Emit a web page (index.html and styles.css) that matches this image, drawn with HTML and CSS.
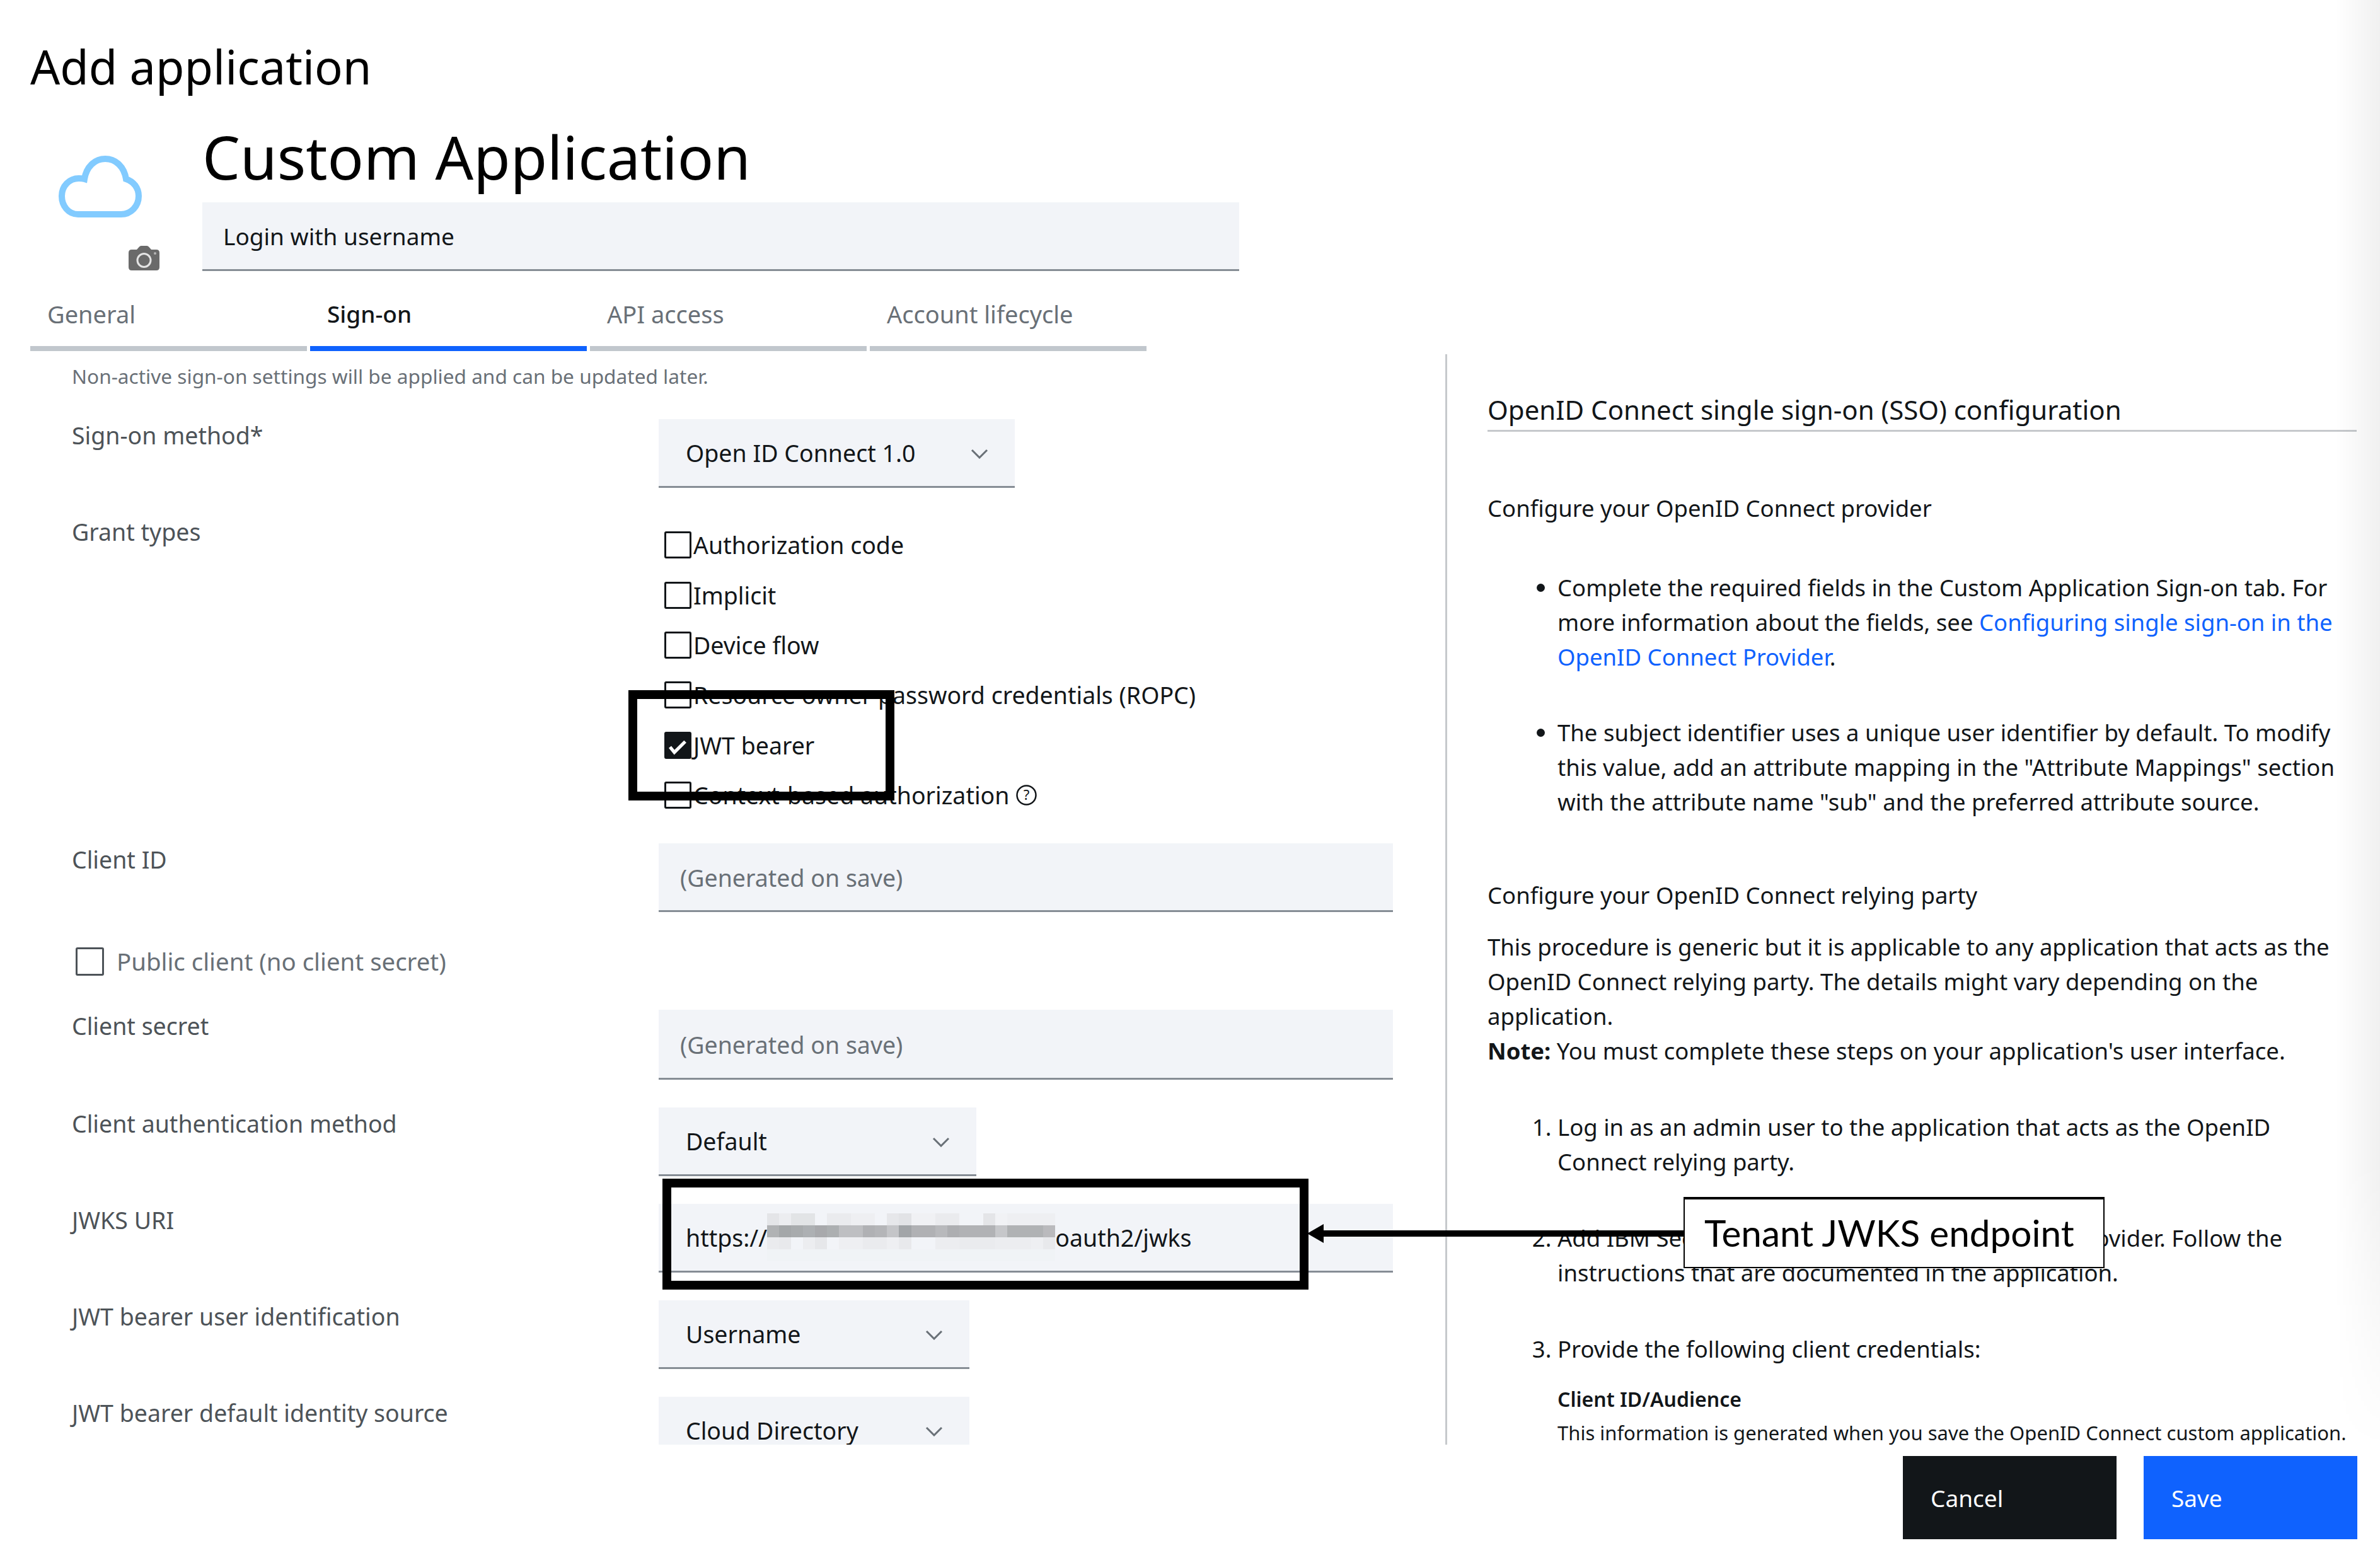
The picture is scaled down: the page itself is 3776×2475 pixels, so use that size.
FILE: index.html
```html
<!DOCTYPE html>
<html lang="en">
<head>
    <meta charset="UTF-8">
    <meta name="viewport" content="width=device-width, initial-scale=1.0">
    <title>Add application</title>
    <link rel="stylesheet" href="styles.css">
</head>
<body>
<div class="page">
    <h1 class="page-title">Add application</h1>

    <div class="app-head">
        <div class="app-icons">
            <svg class="cloud-icon" viewBox="0 0 132 98" width="132" height="98">
                <path d="M31 93C15 93 5 79 5 64C5 48 17 36 32 36C35 36 38 36 41 37C44 18 57 5 74 5C91 5 104 18 107 37C119 41 127 51 127 64C127 80 115 93 99 93Z"/>
            </svg>
            <svg class="camera-icon" viewBox="0 0 49 39" width="49" height="39">
                <path class="camera-body" d="M5 6H13L17 1.500Q18 0 20 0H29Q31 0 32 1.500L36 6H44Q49 6 49 11V34Q49 39 44 39H5Q0 39 0 34V11Q0 6 5 6Z"/>
                <circle class="camera-lens" cx="24.500" cy="23" r="10.500"/>
                <circle class="camera-dot" cx="42" cy="12" r="2"/>
            </svg>
        </div>
        <div class="app-name">
            <div class="app-title">Custom Application</div>
            <div class="field field-name">Login with username</div>
        </div>
    </div>

    <div class="tabs">
        <div class="tab">General</div>
        <div class="tab active">Sign-on</div>
        <div class="tab">API access</div>
        <div class="tab">Account lifecycle</div>
    </div>

    <div class="content">
        <div class="form-pane">
            <p class="note">Non-active sign-on settings will be applied and can be updated later.</p>

            <div class="row row-first">
                <div class="row-label">Sign-on method*</div>
                <div class="field select select-method">Open ID Connect 1.0
                    <svg class="chevron" viewBox="0 0 28 16"><path d="M2 2L14 14L26 2"/></svg>
                </div>
            </div>

            <div class="row">
                <div class="row-label">Grant types</div>
                <div class="grants">
                    <div class="grant"><span class="box"></span>Authorization code</div>
                    <div class="grant"><span class="box"></span>Implicit</div>
                    <div class="grant"><span class="box"></span>Device flow</div>
                    <div class="grant"><span class="box"></span>Resource owner password credentials (ROPC)</div>
                    <div class="grant">
                        <span class="box checked">
                            <svg viewBox="0 0 43 43" width="37" height="37"><path d="M7 21L15 31L35 11"/></svg>
                        </span>JWT bearer
                    </div>
                    <div class="grant"><span class="box"></span>Context-based authorization
                        <svg class="help-icon" viewBox="0 0 33 33" width="33" height="33">
                            <circle cx="16.500" cy="16.500" r="15"/>
                            <text x="16.500" y="24" text-anchor="middle">?</text>
                        </svg>
                    </div>
                </div>
            </div>

            <div class="row row-client">
                <div class="row-label">Client ID</div>
                <div class="field wide placeholder">(Generated on save)</div>
            </div>

            <div class="public-client"><span class="box box-grey"></span>Public client (no client secret)</div>

            <div class="row row-secret">
                <div class="row-label">Client secret</div>
                <div class="field wide placeholder field-tall">(Generated on save)</div>
            </div>

            <div class="row">
                <div class="row-label">Client authentication method</div>
                <div class="field select select-auth">Default
                    <svg class="chevron" viewBox="0 0 28 16"><path d="M2 2L14 14L26 2"/></svg>
                </div>
            </div>

            <div class="row">
                <div class="row-label">JWKS URI</div>
                <div class="field wide uri">https://<svg class="mosaic" viewBox="0 0 24 4" width="457" height="76" preserveAspectRatio="none">
                    <rect x="0" y="3" width="24" height="1" fill="#f0f3f6"/>
                    <g class="mosaic-top">
                        <rect x="0" width="1" height="1" fill="#e4e5e8"/><rect x="1" width="1" height="1" fill="#ecedf0"/><rect x="2" width="2" height="1" fill="#e2e4e6"/><rect x="5" width="2" height="1" fill="#eaebee"/><rect x="7" width="2" height="1" fill="#eeeff2"/><rect x="10" width="1" height="1" fill="#e6e7ea"/><rect x="11" width="1" height="1" fill="#e2e3e6"/><rect x="12" width="2" height="1" fill="#f0f1f4"/><rect x="14" width="2" height="1" fill="#eaebee"/><rect x="18" width="1" height="1" fill="#e4e5e8"/><rect x="19" width="1" height="1" fill="#f1f2f5"/><rect x="20" width="4" height="1" fill="#eeeff2"/>
                    </g>
                    <g class="mosaic-mid">
                        <rect x="0" y="1" width="1" height="1" fill="#b0b2b4"/><rect x="1" y="1" width="1" height="1" fill="#a4a7a9"/><rect x="2" y="1" width="1" height="1" fill="#a8abad"/><rect x="3" y="1" width="1" height="1" fill="#adb0b3"/><rect x="4" y="1" width="1" height="1" fill="#a8a9ac"/><rect x="5" y="1" width="1" height="1" fill="#acafb1"/><rect x="6" y="1" width="2" height="1" fill="#bebfc2"/><rect x="8" y="1" width="1" height="1" fill="#b0b1b4"/><rect x="9" y="1" width="1" height="1" fill="#b4b5b8"/><rect x="10" y="1" width="1" height="1" fill="#c4c5c8"/><rect x="11" y="1" width="1" height="1" fill="#a2a5a8"/><rect x="12" y="1" width="2" height="1" fill="#b0b1b4"/><rect x="14" y="1" width="1" height="1" fill="#b8b9bc"/><rect x="15" y="1" width="1" height="1" fill="#adaeb1"/><rect x="16" y="1" width="3" height="1" fill="#b1b2b5"/><rect x="19" y="1" width="1" height="1" fill="#c6c7ca"/><rect x="20" y="1" width="3" height="1" fill="#b0b2b4"/><rect x="23" y="1" width="1" height="1" fill="#bababd"/>
                    </g>
                    <g class="mosaic-low">
                        <rect x="0" y="2" width="1" height="1" fill="#eaebee"/><rect x="1" y="2" width="1" height="1" fill="#e8e9ec"/><rect x="3" y="2" width="1" height="1" fill="#ecedf0"/><rect x="4" y="2" width="1" height="1" fill="#e6e7ea"/><rect x="6" y="2" width="2" height="1" fill="#eeeff2"/><rect x="8" y="2" width="2" height="1" fill="#eaebee"/><rect x="10" y="2" width="1" height="1" fill="#eeeff2"/><rect x="11" y="2" width="1" height="1" fill="#e8e9ec"/><rect x="14" y="2" width="2" height="1" fill="#ecedf0"/><rect x="16" y="2" width="3" height="1" fill="#eaebee"/><rect x="19" y="2" width="3" height="1" fill="#ecedf0"/><rect x="22" y="2" width="1" height="1" fill="#eeeff2"/><rect x="23" y="2" width="1" height="1" fill="#e8e9ec"/>
                    </g>
                </svg>oauth2/jwks</div>
            </div>

            <div class="row">
                <div class="row-label">JWT bearer user identification</div>
                <div class="field select select-short">Username
                    <svg class="chevron" viewBox="0 0 28 16"><path d="M2 2L14 14L26 2"/></svg>
                </div>
            </div>

            <div class="row">
                <div class="row-label">JWT bearer default identity source</div>
                <div class="field select select-short">Cloud Directory
                    <svg class="chevron" viewBox="0 0 28 16"><path d="M2 2L14 14L26 2"/></svg>
                </div>
            </div>
        </div>

        <div class="help-pane">
            <h2 class="help-title">OpenID Connect single sign-on (SSO) configuration</h2>

            <p class="help-head">Configure your OpenID Connect provider</p>
            <ul class="help-list">
                <li>Complete the required fields in the Custom Application Sign-on tab. For more information about the fields, see <a href="#">Configuring single sign-on in the OpenID Connect Provider</a>.</li>
                <li>The subject identifier uses a unique user identifier by default. To modify this value, add an attribute mapping in the "Attribute Mappings" section with the attribute name "sub" and the preferred attribute source.</li>
            </ul>

            <p class="help-head help-head-2">Configure your OpenID Connect relying party</p>
            <p class="help-text">This procedure is generic but it is applicable to any application that acts as the OpenID Connect relying party. The details might vary depending on the application.<br><b>Note:</b> You must complete these steps on your application's user interface.</p>

            <ol class="help-steps">
                <li>Log in as an admin user to the application that acts as the OpenID Connect relying party.</li>
                <li>Add IBM Security Verify as the OpenID Connect provider. Follow the instructions that are documented in the application.</li>
                <li>Provide the following client credentials:
                    <div class="cred-name">Client ID/Audience</div>
                    <div class="cred-text">This information is generated when you save the OpenID Connect custom application.</div>
                </li>
            </ol>
        </div>
    </div>

    <div class="actions">
        <button class="btn btn-cancel">Cancel</button>
        <button class="btn btn-save">Save</button>
    </div>

    <!-- annotations drawn on top of the screenshot -->
    <div class="edge-shadow"></div>
    <div class="mark mark-jwt"></div>
    <div class="mark mark-uri"></div>
    <svg class="arrow" viewBox="0 0 600 30" width="600" height="30">
        <path d="M0 15L26 0V10H600V20H26V30Z"/>
    </svg>
    <div class="callout">Tenant JWKS endpoint</div>
</div>
</body>
</html>
```

FILE: styles.css
```css
/* Global Styles */
body {
    margin: 0;
    font-family: 'Noto Sans', 'Open Sans', sans-serif;
    color: #121619;
    background: #fff;
}

.page {
    position: relative;
    width: 3776px;
    height: 2475px;
    display: flex;
    flex-direction: column;
    overflow: hidden;
}

.page-title {
    margin: 0;
    padding: 56px 0 0 48px;
    font-size: 74px;
    font-weight: 400;
    line-height: 100px;
    color: #000;
}

/* App header */
.app-head {
    display: flex;
    padding-top: 29px;
}

.app-icons {
    width: 321px;
    display: flex;
    flex-direction: column;
    flex-shrink: 0;
}

.cloud-icon {
    margin: 62px 0 0 93px;
}

    .cloud-icon path {
        fill: none;
        stroke: #82cbff;
        stroke-width: 10;
    }

.camera-icon {
    margin: 45px 0 0 204px;
}

.camera-body {
    fill: #6a6a6a;
}

.camera-lens {
    fill: none;
    stroke: #e4e4e4;
    stroke-width: 3;
}

.camera-dot {
    fill: #b5b5b5;
}

.app-name {
    width: 1645px;
}

.app-title {
    font-size: 95px;
    line-height: 126px;
    color: #000;
}

.field {
    box-sizing: border-box;
    display: flex;
    align-items: center;
    background: #f2f4f8;
    border-bottom: 3px solid #868d95;
    font-size: 37.5px;
    padding-left: 43px;
    height: 109px;
}

.field-name {
    margin-top: 10px;
    padding-left: 33px;
    font-size: 37px;
}

.field-tall {
    height: 111px;
}

/* Tabs */
.tabs {
    display: flex;
    gap: 5px;
    margin: 30px 0 0 48px;
}

.tab {
    width: 439px;
    padding: 0 0 13px 27px;
    box-sizing: border-box;
    border-bottom: 8px solid #c1c7cd;
    font-size: 38px;
    line-height: 76px;
    color: #697077;
}

    .tab.active {
        border-bottom-color: #0f62fe;
        color: #121619;
        font-size: 37px;
        font-weight: 500;
    }

/* Main area */
.content {
    display: flex;
    height: 1735px;
    overflow: hidden;
}

.form-pane {
    width: 2293px;
    flex-shrink: 0;
    box-sizing: border-box;
    padding-left: 114px;
}

.note {
    margin: 15px 0 0;
    font-size: 31.6px;
    line-height: 50px;
    color: #697077;
}

.row {
    display: flex;
    margin-top: 44px;
}

.row-first {
    margin-top: 43px;
}

.row-client {
    margin-top: 37px;
}

.row-secret {
    margin-top: 51px;
}

.row-label {
    width: 931px;
    flex-shrink: 0;
    font-size: 37.5px;
    line-height: 52px;
    color: #4d5358;
}

.wide {
    width: 1165px;
}

.placeholder {
    padding: 3px 0 0 34px;
    color: #697077;
}

.select {
    position: relative;
}

.select-method {
    width: 565px;
}

.select-auth {
    width: 504px;
}

.select-short {
    width: 493px;
}

.chevron {
    position: absolute;
    right: 42px;
    top: 47px;
    width: 28px;
    height: 16px;
}

    .chevron path {
        fill: none;
        stroke: #697077;
        stroke-width: 3;
    }

/* Grant types */
.grants {
    padding: 7px 0 0 9px;
}

.grant {
    display: flex;
    align-items: center;
    height: 79.4px;
    font-size: 37.5px;
}

.box {
    box-sizing: border-box;
    width: 43px;
    height: 43px;
    flex-shrink: 0;
    margin-right: 3px;
    border: 3px solid #121619;
    border-radius: 3px;
}

    .box.checked {
        background: #121619;
    }

        .box.checked path {
            fill: none;
            stroke: #fff;
            stroke-width: 6;
        }

.box-grey {
    width: 45px;
    height: 45px;
    margin-right: 20px;
    border-color: #4d5358;
}

.help-icon {
    margin-left: 10px;
}

    .help-icon circle {
        fill: none;
        stroke: #121619;
        stroke-width: 2.5;
    }

    .help-icon text {
        font-size: 22px;
        fill: #121619;
    }

.public-client {
    display: flex;
    align-items: center;
    margin: 52px 0 0 6px;
    font-size: 38.4px;
    color: #697077;
}

.mosaic {
    flex-shrink: 0;
    shape-rendering: crispEdges;
}

/* Right help panel */
.help-pane {
    flex: 1;
    min-width: 0;
    margin-top: 5px;
    padding: 58px 37px 0 64px;
    border-left: 3px solid #c6c9cc;
    font-size: 36.5px;
    line-height: 55px;
}

.help-title {
    margin: 0;
    padding-bottom: 2px;
    font-size: 42px;
    font-weight: 400;
    line-height: 60px;
    border-bottom: 3px solid #c6c9cc;
}

.help-head {
    margin: 94px 0 0;
}

.help-head-2 {
    margin-top: 93px;
}

.help-list {
    margin: 71px 0 0;
    padding-left: 111px;
}

    .help-list li + li {
        margin-top: 65px;
    }

.help-text {
    margin: 27px 0 0;
}

.help-steps {
    margin: 66px 0 0;
    padding-left: 111px;
}

    .help-steps li + li {
        margin-top: 66px;
    }

.help-list a {
    color: #0f62fe;
    text-decoration: none;
}

.cred-name {
    margin-top: 27px;
    font-size: 32px;
    font-weight: 600;
    line-height: 50px;
}

.cred-text {
    margin-top: 3px;
    font-size: 31px;
    line-height: 50px;
}

/* Bottom buttons */
.actions {
    display: flex;
    justify-content: flex-end;
    gap: 43px;
    padding: 18px 36px 0 0;
}

.btn {
    width: 339px;
    height: 132px;
    padding: 0 0 0 44px;
    border: none;
    text-align: left;
    font-family: inherit;
    font-size: 37px;
    color: #fff;
}

.btn-cancel {
    background: #121619;
}

.btn-save {
    background: #0f62fe;
}

/* Annotations */
.edge-shadow {
    position: absolute;
    top: 0;
    right: 0;
    width: 70px;
    height: 2300px;
    background: linear-gradient(to right, rgba(0, 0, 0, 0), rgba(0, 0, 0, 0.06));
    -webkit-mask-image: linear-gradient(to bottom, #000 80%, transparent);
    mask-image: linear-gradient(to bottom, #000 80%, transparent);
}

.mark {
    position: absolute;
    box-sizing: border-box;
    border: 14px solid #000;
}

.mark-jwt {
    left: 997px;
    top: 1095px;
    width: 422px;
    height: 175px;
}

.mark-uri {
    left: 1051px;
    top: 1870px;
    width: 1025px;
    height: 176px;
}

.arrow {
    position: absolute;
    left: 2074px;
    top: 1942px;
}

.callout {
    position: absolute;
    left: 2671px;
    top: 1899px;
    box-sizing: border-box;
    width: 668px;
    height: 113px;
    padding-left: 31px;
    border: 2px solid #000;
    border-top-width: 4px;
    background: #fff;
    font-family: 'Lato', sans-serif;
    font-size: 58.5px;
    line-height: 105px;
    color: #000;
}
```
